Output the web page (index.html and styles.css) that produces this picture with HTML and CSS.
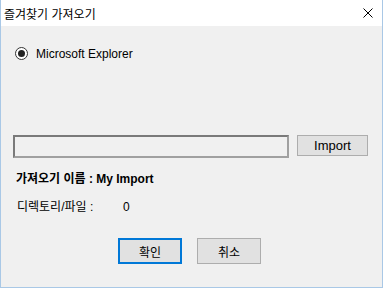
FILE: index.html
```html
<!DOCTYPE html>
<html lang="ko">
<head>
    <meta charset="UTF-8">
    <meta name="viewport" content="width=device-width, initial-scale=1.0">
    <title>즐겨찾기 가져오기</title>
    <link rel="stylesheet" href="styles.css">
</head>
<body>
    <div class="window">
        <!-- Title bar -->
        <div class="titlebar">
            <span class="title">즐겨찾기 가져오기</span>
            <svg class="close" width="10" height="10" viewBox="0 0 10 10">
                <path d="M0.5 0.5 L9.5 9.5 M9.5 0.5 L0.5 9.5" stroke="#000" stroke-width="1" fill="none"/>
            </svg>
        </div>

        <div class="content">
            <label class="radio-row">
                <span class="radio"><span class="dot"></span></span>
                <span>Microsoft Explorer</span>
            </label>

            <div class="path-row">
                <div class="path-box"></div>
                <button class="btn import">Import</button>
            </div>

            <div class="import-name">가져오기 이름 : My Import</div>

            <div class="count-row">
                <span class="count-label">디렉토리/파일 :</span>
                <span class="count">0</span>
            </div>

            <div class="actions">
                <button class="btn ok">확인</button>
                <button class="btn cancel">취소</button>
            </div>
        </div>
    </div>
</body>
</html>
```

FILE: styles.css
```css
body {
    margin: 0;
    font-family: 'Liberation Sans', 'Noto Sans CJK KR', sans-serif;
    font-size: 12px;
    color: #000;
    background-color: #fff;
}

.window {
    width: 383px;
    height: 288px;
    box-sizing: border-box;
    border: 1px solid #a9c8e6;
    border-top: none;
    display: flex;
    flex-direction: column;
}

/* Title bar */
.titlebar {
    height: 26px;
    background-color: #fff;
    display: flex;
    align-items: center;
    justify-content: space-between;
    padding: 0 9px 0 3px;
}

.title {
    font-family: 'Noto Sans CJK KR', sans-serif;
    font-size: 12px;
    color: #000;
}

.close {
    display: block;
}

/* Content */
.content {
    flex: 1;
    background-color: #f0f0f0;
    padding: 0 14px 0 12px;
}

.radio-row {
    display: flex;
    align-items: center;
    margin-top: 21px;
    height: 13px;
    padding-left: 2px;
    font-size: 12px;
}

.radio {
    width: 11px;
    height: 11px;
    border: 1px solid #333;
    border-radius: 50%;
    background-color: #fff;
    display: flex;
    align-items: center;
    justify-content: center;
    margin-right: 8px;
}

.dot {
    width: 7px;
    height: 7px;
    border-radius: 50%;
    background-color: #222;
}

.path-row {
    display: flex;
    align-items: flex-start;
    margin-top: 75px;
}

.path-box {
    width: 272px;
    height: 19px;
    border: 2px solid #7a7a7a;
    border-right-color: #a0a0a0;
    border-bottom-color: #a0a0a0;
    background-color: #f0f0f0;
}

.btn {
    font-family: 'Liberation Sans', 'Noto Sans CJK KR', sans-serif;
    font-size: 12px;
    color: #000;
    background-color: #e1e1e1;
    border: 1px solid #adadad;
    padding: 0;
    cursor: pointer;
}

.import {
    width: 71px;
    height: 21px;
    margin-left: 8px;
    font-size: 13px;
}

.import-name {
    font-family: 'Liberation Sans', 'Noto Sans CJK KR', sans-serif;
    font-weight: bold;
    font-size: 12px;
    margin-top: 13px;
    padding-left: 3px;
    line-height: 16px;
}

.count-row {
    display: flex;
    margin-top: 12px;
    padding-left: 4px;
    line-height: 16px;
}

.count-label {
    width: 106px;
}

.actions {
    display: flex;
    justify-content: center;
    gap: 15px;
    margin-top: 23px;
    padding-right: 2px;
}

.ok, .cancel {
    width: 64px;
    height: 26px;
    font-family: 'Noto Sans CJK KR', sans-serif;
    font-size: 12px;
}

.ok {
    border: 2px solid #0078d7;
}
```
